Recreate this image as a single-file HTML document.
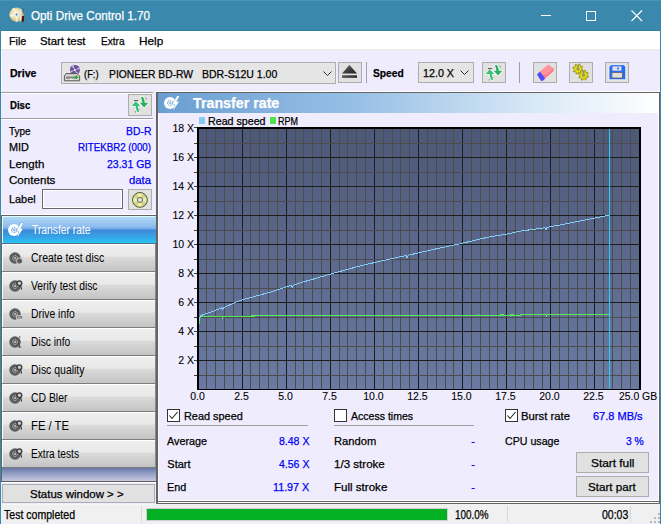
<!DOCTYPE html>
<html><head><meta charset="utf-8"><style>
html,body{margin:0;padding:0;width:661px;height:524px;overflow:hidden;background:#efedfd}
.t{position:absolute;white-space:pre;font-family:"Liberation Sans",sans-serif;-webkit-text-stroke:0.25px currentColor}
</style></head><body>
<div style="position:absolute;left:0px;top:0px;width:661px;height:31px;background:#3a88ab"></div>
<div style="position:absolute;left:1px;top:30px;width:659px;height:1px;background:#2f7fa6"></div>
<div style="position:absolute;left:0px;top:31px;width:1px;height:493px;background:#3a88ab"></div>
<div style="position:absolute;left:660px;top:31px;width:1px;height:493px;background:#3a88ab"></div>
<div style="position:absolute;left:0px;top:523px;width:661px;height:1px;background:#3a88ab"></div>
<div class="t" style="left:31.00px;top:9.84px;font-size:12px;line-height:12px;color:#fff;transform:scaleX(0.9750);transform-origin:0 0;">Opti Drive Control 1.70</div>
<svg style="position:absolute;left:0;top:0" width="30" height="30" viewBox="0 0 30 30">
<defs><radialGradient id="cd" cx="45%" cy="45%" r="60%"><stop offset="0" stop-color="#fffbe8"/><stop offset="0.55" stop-color="#e8dcb0"/><stop offset="1" stop-color="#b8a470"/></radialGradient></defs>
<circle cx="16.6" cy="14.6" r="7.2" fill="url(#cd)"/>
<path d="M16.6 14.6 L12 8.8 L14.2 7.8 Z M16.6 14.6 L10 17 L9.6 14.5 Z M16.6 14.6 L18 21.6 L15.5 21.7 Z" fill="#fff8e0" opacity="0.8"/>
<circle cx="16.6" cy="14.6" r="1.9" fill="#e8f0f0"/><circle cx="16.6" cy="14.6" r="1" fill="#3a88ab"/>
<path d="M20.3 9 L21.6 9.6 L20.8 21.6 L19.6 21.4 Z" fill="#e4e4e4"/>
<rect x="22" y="16" width="2" height="5.6" fill="#6a0808"/><rect x="22.6" y="8.5" width="0.9" height="5" fill="#305a78"/>
</svg>
<div style="position:absolute;left:0px;top:0px;width:661px;height:1px;background:#4a94b4"></div>
<div style="position:absolute;left:541px;top:15px;width:10px;height:1px;background:#fff"></div>
<div style="position:absolute;left:586px;top:11px;width:10px;height:10px;border:1px solid #fff;box-sizing:border-box"></div>
<svg style="position:absolute;left:631px;top:10px" width="12" height="12" viewBox="0 0 12 12"><path d="M0.5 0.5 L11 11 M11 0.5 L0.5 11" stroke="#fff" stroke-width="1.1"/></svg>
<div style="position:absolute;left:1px;top:31px;width:659px;height:18px;background:#fff"></div>
<div style="position:absolute;left:1px;top:49px;width:659px;height:2px;background:#ececec"></div>
<div class="t" style="left:8.50px;top:35.67px;font-size:11.5px;line-height:11.5px;color:#000;transform:scaleX(0.9336);transform-origin:0 0;">File</div>
<div class="t" style="left:40.30px;top:35.67px;font-size:11.5px;line-height:11.5px;color:#000;transform:scaleX(0.9888);transform-origin:0 0;">Start test</div>
<div class="t" style="left:100.60px;top:35.67px;font-size:11.5px;line-height:11.5px;color:#000;transform:scaleX(0.8792);transform-origin:0 0;">Extra</div>
<div class="t" style="left:139.40px;top:35.67px;font-size:11.5px;line-height:11.5px;color:#000;transform:scaleX(1.0230);transform-origin:0 0;">Help</div>
<div style="position:absolute;left:1px;top:51px;width:659px;height:41px;background:#efedfd"></div>
<div style="position:absolute;left:1px;top:51px;width:1px;height:41px;background:#fff"></div>
<div class="t" style="left:9.50px;top:67.69px;font-size:11px;line-height:11px;font-weight:bold;color:#000;transform:scaleX(0.9595);transform-origin:0 0;">Drive</div>
<div style="position:absolute;left:61px;top:62px;width:275px;height:22px;background:#e5e5e5;border:1px solid #adadad;box-sizing:border-box"></div>
<div class="t" style="left:84.00px;top:68.69px;font-size:11px;line-height:11px;color:#000;transform:scaleX(0.8533);transform-origin:0 0;">(F:)</div>
<div class="t" style="left:108.60px;top:68.69px;font-size:11px;line-height:11px;color:#000;transform:scaleX(0.9382);transform-origin:0 0;">PIONEER BD-RW</div>
<div class="t" style="left:202.20px;top:68.69px;font-size:11px;line-height:11px;color:#000;transform:scaleX(0.9547);transform-origin:0 0;">BDR-S12U 1.00</div>
<svg style="position:absolute;left:323px;top:71px" width="9" height="6"><path d="M0.5 0.5 L4.5 4.5 L8.5 0.5" stroke="#333" fill="none" stroke-width="1"/></svg>
<svg style="position:absolute;left:63px;top:64px" width="18" height="18" viewBox="0 0 18 18">
<defs><radialGradient id="pd" cx="50%" cy="50%" r="50%"><stop offset="0" stop-color="#e8e0f0"/><stop offset="0.3" stop-color="#a088c8"/><stop offset="1" stop-color="#6a50a0"/></radialGradient></defs>
<circle cx="11.9" cy="5.9" r="5" fill="#6c5494"/><path d="M11.9 5.9 L8 1.8 L10.5 1 Z M11.9 5.9 L16 10 L13.3 10.8 Z M11.9 5.9 L16.9 5 L16.5 3 Z M11.9 5.9 L7 7 L7.5 9 Z" fill="#c8b4e8"/><circle cx="11.9" cy="5.9" r="1" fill="#f8f8ff"/>
<path d="M3 9.6 L14 9.6 L16.6 12 L16.6 16.8 L1.4 16.8 L1.4 12 Z" fill="#d4d4d4" stroke="#4a4a4a" stroke-width="0.9"/>
<rect x="3" y="12.6" width="9" height="2" fill="#808080"/><rect x="7" y="14.6" width="2.5" height="1" fill="#fff"/>
<path d="M13.3 11.5 L13.3 15 M11.6 13.3 L15 13.3" stroke="#10b010" stroke-width="1.4"/></svg>
<div style="position:absolute;left:338px;top:62px;width:24px;height:21px;background:#e1e1e1;border:1px solid #adadad;box-sizing:border-box"></div>
<svg style="position:absolute;left:338px;top:62px" width="24" height="21"><defs><linearGradient id="ej" x1="0" y1="0" x2="1" y2="1"><stop offset="0" stop-color="#6a6a6a"/><stop offset="1" stop-color="#1a1a1a"/></linearGradient></defs><path d="M11.4 3 L19 11.5 L4 11.5 Z" fill="url(#ej)"/><rect x="4" y="13.2" width="15" height="2.6" fill="url(#ej)"/></svg>
<div style="position:absolute;left:366px;top:62px;width:1px;height:21px;background:#a0a0a0"></div>
<div class="t" style="left:373.30px;top:67.69px;font-size:11px;line-height:11px;font-weight:bold;color:#000;transform:scaleX(0.9299);transform-origin:0 0;">Speed</div>
<div style="position:absolute;left:418px;top:62px;width:56px;height:21px;background:#e5e5e5;border:1px solid #adadad;box-sizing:border-box"></div>
<div class="t" style="left:422.50px;top:68.19px;font-size:11px;line-height:11px;color:#000;transform:scaleX(0.9749);transform-origin:0 0;">12.0 X</div>
<svg style="position:absolute;left:460px;top:70px" width="9" height="6"><path d="M0.5 0.5 L4.5 4.5 L8.5 0.5" stroke="#333" fill="none" stroke-width="1"/></svg>
<div style="position:absolute;left:482px;top:62px;width:24px;height:21px;background:#e1e1e1;border:1px solid #adadad;box-sizing:border-box"></div>
<svg style="position:absolute;left:482px;top:62px" width="24" height="21" viewBox="0 0 24 21">
<path d="M3.6 12 L7.7 7.3 L12.3 12 L10 12 Q10 15.5 11.3 17.8 L9.3 18 Q7.6 15.5 7.6 12 Z" fill="#fff" stroke="#fff" stroke-width="1.4" opacity="0.8"/><path d="M12.8 3.2 L15 3 Q16.6 5.5 16.8 8.7 L20.3 8.7 L16.1 13.6 L11.8 8.7 L14.3 8.7 Q14 5.5 12.8 3.2 Z" fill="#fff" stroke="#fff" stroke-width="1.4" opacity="0.8"/>
<path d="M3.6 12 L7.7 7.3 L12.3 12 L10 12 Q10 15.5 11.3 17.8 L9.3 18 Q7.6 15.5 7.6 12 Z" fill="#34c474"/><path d="M12.8 3.2 L15 3 Q16.6 5.5 16.8 8.7 L20.3 8.7 L16.1 13.6 L11.8 8.7 L14.3 8.7 Q14 5.5 12.8 3.2 Z" fill="#2aae62"/>
<path d="M6 6.6 L10 6.6" stroke="#404040" stroke-width="0.9"/><path d="M17.6 3.7 L18.5 5.6 M10.9 15.2 L11.4 16 M7.1 17.1 L7.5 18.5" stroke="#606060" stroke-width="0.7"/>
</svg>
<div style="position:absolute;left:519px;top:62px;width:1px;height:21px;background:#a0a0a0"></div>
<div style="position:absolute;left:533px;top:62px;width:24px;height:21px;background:#e1e1e1;border:1px solid #adadad;box-sizing:border-box"></div>
<div style="position:absolute;left:569px;top:62px;width:24px;height:21px;background:#e1e1e1;border:1px solid #adadad;box-sizing:border-box"></div>
<div style="position:absolute;left:605px;top:62px;width:24px;height:21px;background:#e1e1e1;border:1px solid #adadad;box-sizing:border-box"></div>
<svg style="position:absolute;left:533px;top:62px" width="24" height="21" viewBox="0 0 24 21">
<path d="M6.9 9.6 L15.2 2.8 L20.9 6.6 L20.6 9 L12.2 16.6 Z" fill="#ff7886"/>
<path d="M15.2 2.8 L20.9 6.6 L12.2 13.5 L6.9 9.6 Z" fill="#ffa0aa" opacity="0.7"/>
<path d="M4 12.5 L6.9 9.6 L12.2 16.6 L9.5 18.9 L7.9 18.8 Z" fill="#4c4cf6"/>
</svg>
<svg style="position:absolute;left:569px;top:62px" width="24" height="21" viewBox="0 0 24 21">
<path d="M12.60 7.00 L14.10 8.01 L13.80 8.99 L11.99 9.00 L11.55 9.55 L11.89 11.32 L10.99 11.80 L9.70 10.53 L9.00 10.60 L7.99 12.10 L7.01 11.80 L7.00 9.99 L6.45 9.55 L4.68 9.89 L4.20 8.99 L5.47 7.70 L5.40 7.00 L3.90 5.99 L4.20 5.01 L6.01 5.00 L6.45 4.45 L6.11 2.68 L7.01 2.20 L8.30 3.47 L9.00 3.40 L10.01 1.90 L10.99 2.20 L11.00 4.01 L11.55 4.45 L13.32 4.11 L13.80 5.01 L12.53 6.30 Z" fill="#e6de08" stroke="#8a8418" stroke-width="0.8"/>
<path d="M18.10 13.20 L19.60 14.21 L19.30 15.19 L17.49 15.20 L17.05 15.75 L17.39 17.52 L16.49 18.00 L15.20 16.73 L14.50 16.80 L13.49 18.30 L12.51 18.00 L12.50 16.19 L11.95 15.75 L10.18 16.09 L9.70 15.19 L10.97 13.90 L10.90 13.20 L9.40 12.19 L9.70 11.21 L11.51 11.20 L11.95 10.65 L11.61 8.88 L12.51 8.40 L13.80 9.67 L14.50 9.60 L15.51 8.10 L16.49 8.40 L16.50 10.21 L17.05 10.65 L18.82 10.31 L19.30 11.21 L18.03 12.50 Z" fill="#e6de08" stroke="#8a8418" stroke-width="0.8"/>
<circle cx="9" cy="7" r="1.8" fill="#b8b020"/><circle cx="14.5" cy="13.2" r="1.8" fill="#b8b020"/>
<rect x="8.2" y="2.8" width="1.6" height="5.5" fill="#909090"/><rect x="13.7" y="9" width="1.6" height="5.5" fill="#909090"/></svg>
<svg style="position:absolute;left:605px;top:62px" width="24" height="21" viewBox="0 0 24 21">
<path d="M6 2.7 L18.7 2.7 L20.7 4.7 L20.7 16.5 Q20.7 17.7 19.5 17.7 L5.2 17.7 Q4 17.7 4 16.5 L4 4.7 Z" fill="#2a6cf0" stroke="#fff" stroke-width="0.7"/>
<rect x="7.4" y="4.4" width="9" height="4.3" fill="#dde0e8"/><circle cx="13" cy="6.5" r="1" fill="#2a6cf0"/>
<rect x="6.9" y="10.5" width="10.5" height="5.5" fill="#e0e0e0" stroke="#606060" stroke-width="0.8"/></svg>
<div style="position:absolute;left:1px;top:92px;width:659px;height:432px;background:#efedfd"></div>
<div style="position:absolute;left:1px;top:92px;width:152px;height:1px;background:#a0a0a0"></div>
<div style="position:absolute;left:1px;top:93px;width:152px;height:1px;background:#fff"></div>
<div class="t" style="left:9.70px;top:99.69px;font-size:11px;line-height:11px;font-weight:bold;color:#000;transform:scaleX(0.8737);transform-origin:0 0;">Disc</div>
<div style="position:absolute;left:128px;top:94px;width:24px;height:22px;background:#e1e1e1;border:1px solid #adadad;box-sizing:border-box"></div>
<svg style="position:absolute;left:128px;top:94px" width="24" height="21" viewBox="0 0 24 21">
<path d="M3.6 12 L7.7 7.3 L12.3 12 L10 12 Q10 15.5 11.3 17.8 L9.3 18 Q7.6 15.5 7.6 12 Z" fill="#fff" stroke="#fff" stroke-width="1.4" opacity="0.8"/><path d="M12.8 3.2 L15 3 Q16.6 5.5 16.8 8.7 L20.3 8.7 L16.1 13.6 L11.8 8.7 L14.3 8.7 Q14 5.5 12.8 3.2 Z" fill="#fff" stroke="#fff" stroke-width="1.4" opacity="0.8"/>
<path d="M3.6 12 L7.7 7.3 L12.3 12 L10 12 Q10 15.5 11.3 17.8 L9.3 18 Q7.6 15.5 7.6 12 Z" fill="#34c474"/><path d="M12.8 3.2 L15 3 Q16.6 5.5 16.8 8.7 L20.3 8.7 L16.1 13.6 L11.8 8.7 L14.3 8.7 Q14 5.5 12.8 3.2 Z" fill="#2aae62"/>
<path d="M6 6.6 L10 6.6" stroke="#404040" stroke-width="0.9"/><path d="M17.6 3.7 L18.5 5.6 M10.9 15.2 L11.4 16 M7.1 17.1 L7.5 18.5" stroke="#606060" stroke-width="0.7"/>
</svg>
<div style="position:absolute;left:1px;top:118px;width:152px;height:1px;background:#a0a0a0"></div>
<div style="position:absolute;left:1px;top:119px;width:152px;height:1px;background:#fff"></div>
<div class="t" style="left:9.40px;top:125.89px;font-size:11px;line-height:11px;color:#000;transform:scaleX(0.9059);transform-origin:0 0;">Type</div>
<div class="t" style="left:125.60px;top:125.89px;font-size:11px;line-height:11px;color:#0000f4;transform:scaleX(0.9446);transform-origin:0 0;">BD-R</div>
<div class="t" style="left:9.40px;top:141.99px;font-size:11px;line-height:11px;color:#000;transform:scaleX(0.9873);transform-origin:0 0;">MID</div>
<div class="t" style="left:78.00px;top:141.99px;font-size:11px;line-height:11px;color:#0000f4;transform:scaleX(0.8845);transform-origin:0 0;">RITEKBR2 (000)</div>
<div class="t" style="left:9.40px;top:158.69px;font-size:11px;line-height:11px;color:#000;transform:scaleX(1.0493);transform-origin:0 0;">Length</div>
<div class="t" style="left:106.70px;top:158.69px;font-size:11px;line-height:11px;color:#0000f4;transform:scaleX(0.9533);transform-origin:0 0;">23.31 GB</div>
<div class="t" style="left:9.40px;top:175.09px;font-size:11px;line-height:11px;color:#000;transform:scaleX(1.0538);transform-origin:0 0;">Contents</div>
<div class="t" style="left:129.00px;top:175.09px;font-size:11px;line-height:11px;color:#0000f4;transform:scaleX(1.0270);transform-origin:0 0;">data</div>
<div class="t" style="left:9.40px;top:193.69px;font-size:11px;line-height:11px;color:#000;transform:scaleX(0.9880);transform-origin:0 0;">Label</div>
<div style="position:absolute;left:42px;top:189px;width:81px;height:20px;background:#efedfd;border:1px solid #6a6a6a;box-shadow:inset 0 0 0 1px #fff;box-sizing:border-box"></div>
<div style="position:absolute;left:128px;top:189px;width:24px;height:21px;background:#e1e1e1;border:1px solid #adadad;box-sizing:border-box"></div>
<svg style="position:absolute;left:128px;top:189px" width="24" height="22" viewBox="0 0 24 22">
<defs><radialGradient id="yd"><stop offset="0" stop-color="#f4f4c0"/><stop offset="1" stop-color="#d8d890"/></radialGradient></defs>
<clipPath id="ydc"><circle cx="11.9" cy="10.9" r="7.4"/></clipPath><circle cx="11.9" cy="10.9" r="7.4" fill="#d4d480"/><path clip-path="url(#ydc)" d="M11.9 10.9 L8 2 L15.8 2 Z M11.9 10.9 L8 20 L15.8 20 Z M11.9 10.9 L3 7 L3 14.8 Z M11.9 10.9 L21 7 L21 14.8 Z" fill="#eeeeb4"/><circle cx="11.9" cy="10.9" r="7.4" fill="none" stroke="#50503a" stroke-width="1"/><circle cx="11.9" cy="10.9" r="2.6" fill="#c8d0c0" stroke="#6a7a6a" stroke-width="1"/><circle cx="11.9" cy="10.9" r="1.2" fill="#f0f0f0"/></svg>
<div style="position:absolute;left:1px;top:214px;width:155px;height:1px;background:#fff"></div>
<div style="position:absolute;left:1px;top:215px;width:157px;height:1px;background:#646464"></div>
<div style="position:absolute;left:1px;top:215px;width:1px;height:267px;background:#646464"></div>
<div style="position:absolute;left:2px;top:216px;width:154px;height:27px;background:linear-gradient(#b4dcf8 0%,#8cbcee 40%,#6ea6e6 48%,#3e88d8 52%,#36a6e8 80%,#28c8f6 100%)"></div>
<div style="position:absolute;left:2px;top:216px;width:153px;height:1px;background:#e0fcff"></div>
<div style="position:absolute;left:2px;top:216px;width:1px;height:27px;background:#e0fcff"></div>
<svg style="position:absolute;left:6.300000000000001px;top:221.8px" width="18" height="16" viewBox="0 0 18 16">
<circle cx="8" cy="8" r="6" fill="#fff"/><circle cx="8" cy="8" r="2.4" fill="none" stroke="#5a9ae0" stroke-width="1.1" stroke-dasharray="1.3 0.7"/><circle cx="8" cy="8" r="0.9" fill="#5a9ae0"/>
<path d="M15.2 1 L17.2 1.2 L14.2 6.9 L16.9 6.5 L11.1 15.4 L13.4 9.3 L10.3 9.7 Z" fill="#fff" stroke="#5a9ae0" stroke-width="0.9" stroke-linejoin="round"/><path d="M15.2 1 L17.2 1.2 L14.2 6.9 L16.9 6.5 L11.1 15.4 L13.4 9.3 L10.3 9.7 Z" fill="#fff"/></svg>
<div class="t" style="left:31.50px;top:224.04px;font-size:12px;line-height:12px;color:#fff;transform:scaleX(0.8571);transform-origin:0 0;-webkit-text-stroke:0">Transfer rate</div>
<div style="position:absolute;left:2px;top:243px;width:154px;height:1px;background:#5a6a80"></div>
<div style="position:absolute;left:2px;top:244px;width:154px;height:27px;background:linear-gradient(#f0f0f0 0%,#e8e8e8 45%,#dadada 50%,#c4c4c4 100%)"></div>
<div style="position:absolute;left:2px;top:244px;width:153px;height:1px;background:#fff"></div>
<div style="position:absolute;left:2px;top:244px;width:1px;height:27px;background:#fff"></div>
<div style="position:absolute;left:155px;top:244px;width:1px;height:28px;background:#8a8a8a"></div>
<svg style="position:absolute;left:6.699999999999999px;top:249.89999999999998px" width="18" height="16" viewBox="0 0 18 16">
<circle cx="8" cy="8" r="5.7" fill="#5c5c5c"/><circle cx="8" cy="8" r="2.4" fill="none" stroke="#d0d0d0" stroke-width="1" stroke-dasharray="1.2 0.8"/><circle cx="8" cy="8" r="0.9" fill="#d8d8d8"/><circle cx="12.5" cy="11" r="3" fill="#5a5a5a" stroke="#e0e0e0" stroke-width="0.8"/></svg>
<div class="t" style="left:31.00px;top:251.84px;font-size:12px;line-height:12px;color:#000;transform:scaleX(0.8792);transform-origin:0 0;-webkit-text-stroke:0">Create test disc</div>
<div style="position:absolute;left:2px;top:271px;width:154px;height:1px;background:#7c7c7c"></div>
<div style="position:absolute;left:2px;top:272px;width:154px;height:27px;background:linear-gradient(#f0f0f0 0%,#e8e8e8 45%,#dadada 50%,#c4c4c4 100%)"></div>
<div style="position:absolute;left:2px;top:272px;width:153px;height:1px;background:#fff"></div>
<div style="position:absolute;left:2px;top:272px;width:1px;height:27px;background:#fff"></div>
<div style="position:absolute;left:155px;top:272px;width:1px;height:28px;background:#8a8a8a"></div>
<svg style="position:absolute;left:6.699999999999999px;top:277.9px" width="18" height="16" viewBox="0 0 18 16">
<circle cx="8" cy="8" r="5.7" fill="#5c5c5c"/><circle cx="8" cy="8" r="2.4" fill="none" stroke="#d0d0d0" stroke-width="1" stroke-dasharray="1.2 0.8"/><circle cx="8" cy="8" r="0.9" fill="#d8d8d8"/><circle cx="12.4" cy="5.2" r="2.4" fill="#c8c8c8" stroke="#3a3a3a" stroke-width="1.3"/><path d="M13.6 7.4 L14.6 11.5" stroke="#303030" stroke-width="1.1"/></svg>
<div class="t" style="left:31.00px;top:279.84px;font-size:12px;line-height:12px;color:#000;transform:scaleX(0.8596);transform-origin:0 0;-webkit-text-stroke:0">Verify test disc</div>
<div style="position:absolute;left:2px;top:299px;width:154px;height:1px;background:#7c7c7c"></div>
<div style="position:absolute;left:2px;top:300px;width:154px;height:27px;background:linear-gradient(#f0f0f0 0%,#e8e8e8 45%,#dadada 50%,#c4c4c4 100%)"></div>
<div style="position:absolute;left:2px;top:300px;width:153px;height:1px;background:#fff"></div>
<div style="position:absolute;left:2px;top:300px;width:1px;height:27px;background:#fff"></div>
<div style="position:absolute;left:155px;top:300px;width:1px;height:28px;background:#8a8a8a"></div>
<svg style="position:absolute;left:6.699999999999999px;top:305.9px" width="18" height="16" viewBox="0 0 18 16">
<circle cx="8" cy="8" r="5.7" fill="#5c5c5c"/><circle cx="8" cy="8" r="2.4" fill="none" stroke="#d0d0d0" stroke-width="1" stroke-dasharray="1.2 0.8"/><circle cx="8" cy="8" r="0.9" fill="#d8d8d8"/><rect x="9.5" y="9.5" width="6" height="3.5" fill="#7a7a7a" stroke="#e0e0e0" stroke-width="0.6"/><path d="M10.5 11.3 L14 11.3" stroke="#ccc" stroke-width="0.8"/></svg>
<div class="t" style="left:31.00px;top:307.84px;font-size:12px;line-height:12px;color:#000;transform:scaleX(0.8641);transform-origin:0 0;-webkit-text-stroke:0">Drive info</div>
<div style="position:absolute;left:2px;top:327px;width:154px;height:1px;background:#7c7c7c"></div>
<div style="position:absolute;left:2px;top:328px;width:154px;height:27px;background:linear-gradient(#f0f0f0 0%,#e8e8e8 45%,#dadada 50%,#c4c4c4 100%)"></div>
<div style="position:absolute;left:2px;top:328px;width:153px;height:1px;background:#fff"></div>
<div style="position:absolute;left:2px;top:328px;width:1px;height:27px;background:#fff"></div>
<div style="position:absolute;left:155px;top:328px;width:1px;height:28px;background:#8a8a8a"></div>
<svg style="position:absolute;left:6.699999999999999px;top:333.9px" width="18" height="16" viewBox="0 0 18 16">
<circle cx="8" cy="8" r="5.7" fill="#5c5c5c"/><circle cx="8" cy="8" r="2.4" fill="none" stroke="#d0d0d0" stroke-width="1" stroke-dasharray="1.2 0.8"/><circle cx="8" cy="8" r="0.9" fill="#d8d8d8"/><path d="M12.3 5.5 L12.3 13 L13.8 13" stroke="#505050" stroke-width="1.3" fill="none"/><circle cx="12.8" cy="3" r="0.8" fill="#505050"/></svg>
<div class="t" style="left:31.00px;top:335.84px;font-size:12px;line-height:12px;color:#000;transform:scaleX(0.8541);transform-origin:0 0;-webkit-text-stroke:0">Disc info</div>
<div style="position:absolute;left:2px;top:355px;width:154px;height:1px;background:#7c7c7c"></div>
<div style="position:absolute;left:2px;top:356px;width:154px;height:27px;background:linear-gradient(#f0f0f0 0%,#e8e8e8 45%,#dadada 50%,#c4c4c4 100%)"></div>
<div style="position:absolute;left:2px;top:356px;width:153px;height:1px;background:#fff"></div>
<div style="position:absolute;left:2px;top:356px;width:1px;height:27px;background:#fff"></div>
<div style="position:absolute;left:155px;top:356px;width:1px;height:28px;background:#8a8a8a"></div>
<svg style="position:absolute;left:6.699999999999999px;top:361.9px" width="18" height="16" viewBox="0 0 18 16">
<circle cx="8" cy="8" r="5.7" fill="#5c5c5c"/><circle cx="8" cy="8" r="2.4" fill="none" stroke="#d0d0d0" stroke-width="1" stroke-dasharray="1.2 0.8"/><circle cx="8" cy="8" r="0.9" fill="#d8d8d8"/><circle cx="12.4" cy="5.2" r="2.4" fill="#c8c8c8" stroke="#3a3a3a" stroke-width="1.3"/><path d="M13.6 7.4 L14.6 11.5" stroke="#303030" stroke-width="1.1"/></svg>
<div class="t" style="left:31.00px;top:363.84px;font-size:12px;line-height:12px;color:#000;transform:scaleX(0.8719);transform-origin:0 0;-webkit-text-stroke:0">Disc quality</div>
<div style="position:absolute;left:2px;top:383px;width:154px;height:1px;background:#7c7c7c"></div>
<div style="position:absolute;left:2px;top:384px;width:154px;height:27px;background:linear-gradient(#f0f0f0 0%,#e8e8e8 45%,#dadada 50%,#c4c4c4 100%)"></div>
<div style="position:absolute;left:2px;top:384px;width:153px;height:1px;background:#fff"></div>
<div style="position:absolute;left:2px;top:384px;width:1px;height:27px;background:#fff"></div>
<div style="position:absolute;left:155px;top:384px;width:1px;height:28px;background:#8a8a8a"></div>
<svg style="position:absolute;left:6.699999999999999px;top:389.9px" width="18" height="16" viewBox="0 0 18 16">
<circle cx="8" cy="8" r="5.7" fill="#5c5c5c"/><circle cx="8" cy="8" r="2.4" fill="none" stroke="#d0d0d0" stroke-width="1" stroke-dasharray="1.2 0.8"/><circle cx="8" cy="8" r="0.9" fill="#d8d8d8"/><circle cx="12.4" cy="5.2" r="2.4" fill="#c8c8c8" stroke="#3a3a3a" stroke-width="1.3"/><path d="M13.6 7.4 L14.6 11.5" stroke="#303030" stroke-width="1.1"/></svg>
<div class="t" style="left:31.00px;top:391.84px;font-size:12px;line-height:12px;color:#000;transform:scaleX(0.8667);transform-origin:0 0;-webkit-text-stroke:0">CD Bler</div>
<div style="position:absolute;left:2px;top:411px;width:154px;height:1px;background:#7c7c7c"></div>
<div style="position:absolute;left:2px;top:412px;width:154px;height:27px;background:linear-gradient(#f0f0f0 0%,#e8e8e8 45%,#dadada 50%,#c4c4c4 100%)"></div>
<div style="position:absolute;left:2px;top:412px;width:153px;height:1px;background:#fff"></div>
<div style="position:absolute;left:2px;top:412px;width:1px;height:27px;background:#fff"></div>
<div style="position:absolute;left:155px;top:412px;width:1px;height:28px;background:#8a8a8a"></div>
<svg style="position:absolute;left:6.699999999999999px;top:417.9px" width="18" height="16" viewBox="0 0 18 16">
<circle cx="8" cy="8" r="5.7" fill="#5c5c5c"/><circle cx="8" cy="8" r="2.4" fill="none" stroke="#d0d0d0" stroke-width="1" stroke-dasharray="1.2 0.8"/><circle cx="8" cy="8" r="0.9" fill="#d8d8d8"/><circle cx="12.4" cy="5.2" r="2.4" fill="#c8c8c8" stroke="#3a3a3a" stroke-width="1.3"/><path d="M13.6 7.4 L14.6 11.5" stroke="#303030" stroke-width="1.1"/></svg>
<div class="t" style="left:31.00px;top:419.84px;font-size:12px;line-height:12px;color:#000;transform:scaleX(0.9394);transform-origin:0 0;-webkit-text-stroke:0">FE / TE</div>
<div style="position:absolute;left:2px;top:439px;width:154px;height:1px;background:#7c7c7c"></div>
<div style="position:absolute;left:2px;top:440px;width:154px;height:27px;background:linear-gradient(#f0f0f0 0%,#e8e8e8 45%,#dadada 50%,#c4c4c4 100%)"></div>
<div style="position:absolute;left:2px;top:440px;width:153px;height:1px;background:#fff"></div>
<div style="position:absolute;left:2px;top:440px;width:1px;height:27px;background:#fff"></div>
<div style="position:absolute;left:155px;top:440px;width:1px;height:28px;background:#8a8a8a"></div>
<svg style="position:absolute;left:6.699999999999999px;top:445.9px" width="18" height="16" viewBox="0 0 18 16">
<circle cx="8" cy="8" r="5.7" fill="#5c5c5c"/><circle cx="8" cy="8" r="2.4" fill="none" stroke="#d0d0d0" stroke-width="1" stroke-dasharray="1.2 0.8"/><circle cx="8" cy="8" r="0.9" fill="#d8d8d8"/><circle cx="12.4" cy="5.2" r="2.4" fill="#c8c8c8" stroke="#3a3a3a" stroke-width="1.3"/><path d="M13.6 7.4 L14.6 11.5" stroke="#303030" stroke-width="1.1"/></svg>
<div class="t" style="left:31.00px;top:447.84px;font-size:12px;line-height:12px;color:#000;transform:scaleX(0.8467);transform-origin:0 0;-webkit-text-stroke:0">Extra tests</div>
<div style="position:absolute;left:2px;top:467px;width:154px;height:1px;background:#7c7c7c"></div>
<div style="position:absolute;left:2px;top:468px;width:154px;height:13px;background:linear-gradient(#6878a8,#9aa4c8 50%,#c4c8de)"></div>
<div style="position:absolute;left:1px;top:481px;width:156px;height:1px;background:#606060"></div>
<div style="position:absolute;left:2px;top:482px;width:154px;height:1px;background:#fff"></div>
<div style="position:absolute;left:2px;top:484px;width:153px;height:19px;background:#e1e1e1;border:1px solid #adadad;box-sizing:border-box"></div>
<div class="t" style="left:30.35px;top:489.19px;font-size:11px;line-height:11px;color:#000;transform:scaleX(1.0424);transform-origin:0 0;">Status window &gt; &gt;</div>
<div style="position:absolute;left:156px;top:91px;width:504px;height:413px;background:#efedfd"></div>
<div style="position:absolute;left:156px;top:91px;width:504px;height:1px;background:#fff"></div>
<div style="position:absolute;left:156px;top:92px;width:504px;height:1px;background:#646464"></div>
<div style="position:absolute;left:156px;top:92px;width:2px;height:412px;background:#646464"></div>
<div style="position:absolute;left:659px;top:92px;width:1px;height:412px;background:#646464"></div>
<div style="position:absolute;left:158px;top:113px;width:1px;height:388px;background:#f8f8ff"></div>
<div style="position:absolute;left:658px;top:113px;width:1px;height:388px;background:#fff"></div>
<div style="position:absolute;left:158px;top:500px;width:501px;height:1px;background:#fff"></div>
<div style="position:absolute;left:158px;top:501px;width:502px;height:1px;background:#646464"></div>
<div style="position:absolute;left:158px;top:502px;width:501px;height:1px;background:#fff"></div>
<div style="position:absolute;left:156px;top:503px;width:504px;height:1px;background:#646464"></div>
<div style="position:absolute;left:158px;top:93px;width:501px;height:20px;background:linear-gradient(90deg,#6a9ed2 0%,#98c0e6 40%,#d8e8f6 75%,#ffffff 100%)"></div>
<svg style="position:absolute;left:162.3px;top:95px" width="18" height="16" viewBox="0 0 18 16">
<circle cx="8" cy="8" r="6" fill="#fff"/><circle cx="8" cy="8" r="2.4" fill="none" stroke="#74a8da" stroke-width="1.1" stroke-dasharray="1.3 0.7"/><circle cx="8" cy="8" r="0.9" fill="#74a8da"/>
<path d="M15.2 1 L17.2 1.2 L14.2 6.9 L16.9 6.5 L11.1 15.4 L13.4 9.3 L10.3 9.7 Z" fill="#fff" stroke="#74a8da" stroke-width="0.9" stroke-linejoin="round"/><path d="M15.2 1 L17.2 1.2 L14.2 6.9 L16.9 6.5 L11.1 15.4 L13.4 9.3 L10.3 9.7 Z" fill="#fff"/></svg>
<div class="t" style="left:193.40px;top:95.65px;font-size:14px;line-height:14px;font-weight:bold;color:#fff;transform:scaleX(1.0174);transform-origin:0 0;">Transfer rate</div>
<div style="position:absolute;left:199px;top:117px;width:6px;height:7px;background:#88ccf4"></div>
<div class="t" style="left:208.00px;top:116.11px;font-size:10.5px;line-height:10.5px;color:#000;transform:scaleX(1.0155);transform-origin:0 0;">Read speed</div>
<div style="position:absolute;left:270px;top:117px;width:6px;height:7px;background:#50e050"></div>
<div class="t" style="left:278.00px;top:116.11px;font-size:10.5px;line-height:10.5px;color:#000;transform:scaleX(0.8573);transform-origin:0 0;">RPM</div>
<svg style="position:absolute;left:0;top:0" width="661" height="524" viewBox="0 0 661 524" shape-rendering="crispEdges">
<defs><linearGradient id="pf" x1="0" y1="0" x2="0" y2="1"><stop offset="0" stop-color="#4d5877"/><stop offset="1" stop-color="#6a7aa2"/></linearGradient></defs>
<rect x="197" y="127" width="443" height="262" fill="url(#pf)"/>
<rect x="206" y="129" width="1" height="260" fill="#4c4c4c"/>
<rect x="215" y="129" width="1" height="260" fill="#4c4c4c"/>
<rect x="224" y="129" width="1" height="260" fill="#4c4c4c"/>
<rect x="233" y="129" width="1" height="260" fill="#4c4c4c"/>
<rect x="242" y="129" width="1" height="260" fill="#1c1c1c"/>
<rect x="250" y="129" width="1" height="260" fill="#4c4c4c"/>
<rect x="259" y="129" width="1" height="260" fill="#4c4c4c"/>
<rect x="268" y="129" width="1" height="260" fill="#4c4c4c"/>
<rect x="277" y="129" width="1" height="260" fill="#4c4c4c"/>
<rect x="286" y="129" width="1" height="260" fill="#1c1c1c"/>
<rect x="295" y="129" width="1" height="260" fill="#4c4c4c"/>
<rect x="303" y="129" width="1" height="260" fill="#4c4c4c"/>
<rect x="312" y="129" width="1" height="260" fill="#4c4c4c"/>
<rect x="321" y="129" width="1" height="260" fill="#4c4c4c"/>
<rect x="330" y="129" width="1" height="260" fill="#1c1c1c"/>
<rect x="339" y="129" width="1" height="260" fill="#4c4c4c"/>
<rect x="347" y="129" width="1" height="260" fill="#4c4c4c"/>
<rect x="356" y="129" width="1" height="260" fill="#4c4c4c"/>
<rect x="365" y="129" width="1" height="260" fill="#4c4c4c"/>
<rect x="374" y="129" width="1" height="260" fill="#1c1c1c"/>
<rect x="383" y="129" width="1" height="260" fill="#4c4c4c"/>
<rect x="392" y="129" width="1" height="260" fill="#4c4c4c"/>
<rect x="400" y="129" width="1" height="260" fill="#4c4c4c"/>
<rect x="409" y="129" width="1" height="260" fill="#4c4c4c"/>
<rect x="418" y="129" width="1" height="260" fill="#1c1c1c"/>
<rect x="427" y="129" width="1" height="260" fill="#4c4c4c"/>
<rect x="436" y="129" width="1" height="260" fill="#4c4c4c"/>
<rect x="445" y="129" width="1" height="260" fill="#4c4c4c"/>
<rect x="453" y="129" width="1" height="260" fill="#4c4c4c"/>
<rect x="462" y="129" width="1" height="260" fill="#1c1c1c"/>
<rect x="471" y="129" width="1" height="260" fill="#4c4c4c"/>
<rect x="480" y="129" width="1" height="260" fill="#4c4c4c"/>
<rect x="489" y="129" width="1" height="260" fill="#4c4c4c"/>
<rect x="497" y="129" width="1" height="260" fill="#4c4c4c"/>
<rect x="506" y="129" width="1" height="260" fill="#1c1c1c"/>
<rect x="515" y="129" width="1" height="260" fill="#4c4c4c"/>
<rect x="524" y="129" width="1" height="260" fill="#4c4c4c"/>
<rect x="533" y="129" width="1" height="260" fill="#4c4c4c"/>
<rect x="542" y="129" width="1" height="260" fill="#4c4c4c"/>
<rect x="550" y="129" width="1" height="260" fill="#1c1c1c"/>
<rect x="559" y="129" width="1" height="260" fill="#4c4c4c"/>
<rect x="568" y="129" width="1" height="260" fill="#4c4c4c"/>
<rect x="577" y="129" width="1" height="260" fill="#4c4c4c"/>
<rect x="586" y="129" width="1" height="260" fill="#4c4c4c"/>
<rect x="594" y="129" width="1" height="260" fill="#1c1c1c"/>
<rect x="603" y="129" width="1" height="260" fill="#4c4c4c"/>
<rect x="612" y="129" width="1" height="260" fill="#4c4c4c"/>
<rect x="621" y="129" width="1" height="260" fill="#4c4c4c"/>
<rect x="630" y="129" width="1" height="260" fill="#4c4c4c"/>
<rect x="199" y="375" width="440" height="1" fill="#4c4c4c"/>
<rect x="194" y="375" width="3" height="1" fill="#404040"/>
<rect x="199" y="360" width="440" height="1" fill="#1c1c1c"/>
<rect x="194" y="360" width="3" height="1" fill="#404040"/>
<rect x="199" y="346" width="440" height="1" fill="#4c4c4c"/>
<rect x="194" y="346" width="3" height="1" fill="#404040"/>
<rect x="199" y="331" width="440" height="1" fill="#1c1c1c"/>
<rect x="194" y="331" width="3" height="1" fill="#404040"/>
<rect x="199" y="317" width="440" height="1" fill="#4c4c4c"/>
<rect x="194" y="317" width="3" height="1" fill="#404040"/>
<rect x="199" y="302" width="440" height="1" fill="#1c1c1c"/>
<rect x="194" y="302" width="3" height="1" fill="#404040"/>
<rect x="199" y="288" width="440" height="1" fill="#4c4c4c"/>
<rect x="194" y="288" width="3" height="1" fill="#404040"/>
<rect x="199" y="273" width="440" height="1" fill="#1c1c1c"/>
<rect x="194" y="273" width="3" height="1" fill="#404040"/>
<rect x="199" y="259" width="440" height="1" fill="#4c4c4c"/>
<rect x="194" y="259" width="3" height="1" fill="#404040"/>
<rect x="199" y="244" width="440" height="1" fill="#1c1c1c"/>
<rect x="194" y="244" width="3" height="1" fill="#404040"/>
<rect x="199" y="230" width="440" height="1" fill="#4c4c4c"/>
<rect x="194" y="230" width="3" height="1" fill="#404040"/>
<rect x="199" y="215" width="440" height="1" fill="#1c1c1c"/>
<rect x="194" y="215" width="3" height="1" fill="#404040"/>
<rect x="199" y="201" width="440" height="1" fill="#4c4c4c"/>
<rect x="194" y="201" width="3" height="1" fill="#404040"/>
<rect x="199" y="186" width="440" height="1" fill="#1c1c1c"/>
<rect x="194" y="186" width="3" height="1" fill="#404040"/>
<rect x="199" y="172" width="440" height="1" fill="#4c4c4c"/>
<rect x="194" y="172" width="3" height="1" fill="#404040"/>
<rect x="199" y="157" width="440" height="1" fill="#1c1c1c"/>
<rect x="194" y="157" width="3" height="1" fill="#404040"/>
<rect x="199" y="143" width="440" height="1" fill="#4c4c4c"/>
<rect x="194" y="143" width="3" height="1" fill="#404040"/>
<rect x="194" y="127" width="3" height="1" fill="#404040"/>
<rect x="197" y="127" width="444" height="2" fill="#000"/>
<rect x="197" y="127" width="2" height="263" fill="#000"/>
<rect x="639" y="127" width="2" height="263" fill="#000"/>
<rect x="197" y="389" width="444" height="1" fill="#000"/>
<rect x="609" y="129" width="1" height="260" fill="#30c8f0"/>
</svg>
<svg style="position:absolute;left:0;top:0" width="661" height="524"><path d="M199.5 324 L199.5 319 L200.5 316.5 L252 316.5 L252 315.5 L520 315.5 L520 314.5 L609 314.5 M222 316.5 L222.5 317.5 L223 316.5 M251 316.5 L252 315.5 L253 316.5 L254 315.5 L255 316.5 M477 315.5 L478.5 314.5 L480 315.5 M500 315.5 L501 314.5 L502 315.5 L503 314.5 L504 315.5 M510 315.5 L511 314.5 L512 315.5 L513 314.5 L514 315.5 M545.5 314.5 L546.5 316 L547.5 314.5" stroke="#55ea55" stroke-width="1" fill="none" shape-rendering="crispEdges"/><path d="M199.5 321.0 L199.5 318.0 L200.5 316.0 L201.5 315.5 L206.0 313.5 L211.0 312.0 L221.5 308.0 L222.5 309.5 L223.5 307.5 L226.0 306.5 L234.0 303.0 L240.0 300.5 L270.0 292.2 L290.0 285.8 L291.0 285.6 L292.2 287.6 L293.5 285.2 L300.0 282.9 L330.8 274.0 L340.0 271.4 L360.0 266.0 L375.0 262.4 L406.0 255.5 L407.0 258.0 L408.2 255.2 L418.0 253.0 L440.0 248.0 L462.4 243.2 L488.4 237.1 L506.6 234.1 L520.0 231.2 L545.0 227.7 L546.0 229.5 L547.0 227.4 L565.4 223.9 L588.0 219.4 L609.0 215.3" stroke="#84ccf6" stroke-width="1" fill="none" shape-rendering="crispEdges"/></svg>
<div class="t" style="left:178.23px;top:354.71px;font-size:10.5px;line-height:10.5px;color:#000;-webkit-text-stroke:0.1px">2 X</div>
<div class="t" style="left:178.23px;top:325.71px;font-size:10.5px;line-height:10.5px;color:#000;-webkit-text-stroke:0.1px">4 X</div>
<div class="t" style="left:178.23px;top:296.71px;font-size:10.5px;line-height:10.5px;color:#000;-webkit-text-stroke:0.1px">6 X</div>
<div class="t" style="left:178.23px;top:267.71px;font-size:10.5px;line-height:10.5px;color:#000;-webkit-text-stroke:0.1px">8 X</div>
<div class="t" style="left:172.41px;top:238.71px;font-size:10.5px;line-height:10.5px;color:#000;-webkit-text-stroke:0.1px">10 X</div>
<div class="t" style="left:172.41px;top:209.71px;font-size:10.5px;line-height:10.5px;color:#000;-webkit-text-stroke:0.1px">12 X</div>
<div class="t" style="left:172.41px;top:180.71px;font-size:10.5px;line-height:10.5px;color:#000;-webkit-text-stroke:0.1px">14 X</div>
<div class="t" style="left:172.41px;top:151.71px;font-size:10.5px;line-height:10.5px;color:#000;-webkit-text-stroke:0.1px">16 X</div>
<div class="t" style="left:172.41px;top:122.71px;font-size:10.5px;line-height:10.5px;color:#000;-webkit-text-stroke:0.1px">18 X</div>
<div class="t" style="left:190.20px;top:391.11px;font-size:10.5px;line-height:10.5px;color:#000;-webkit-text-stroke:0.1px">0.0</div>
<div class="t" style="left:234.20px;top:391.11px;font-size:10.5px;line-height:10.5px;color:#000;-webkit-text-stroke:0.1px">2.5</div>
<div class="t" style="left:278.20px;top:391.11px;font-size:10.5px;line-height:10.5px;color:#000;-webkit-text-stroke:0.1px">5.0</div>
<div class="t" style="left:322.20px;top:391.11px;font-size:10.5px;line-height:10.5px;color:#000;-webkit-text-stroke:0.1px">7.5</div>
<div class="t" style="left:363.28px;top:391.11px;font-size:10.5px;line-height:10.5px;color:#000;-webkit-text-stroke:0.1px">10.0</div>
<div class="t" style="left:407.28px;top:391.11px;font-size:10.5px;line-height:10.5px;color:#000;-webkit-text-stroke:0.1px">12.5</div>
<div class="t" style="left:451.28px;top:391.11px;font-size:10.5px;line-height:10.5px;color:#000;-webkit-text-stroke:0.1px">15.0</div>
<div class="t" style="left:495.28px;top:391.11px;font-size:10.5px;line-height:10.5px;color:#000;-webkit-text-stroke:0.1px">17.5</div>
<div class="t" style="left:539.28px;top:391.11px;font-size:10.5px;line-height:10.5px;color:#000;-webkit-text-stroke:0.1px">20.0</div>
<div class="t" style="left:583.28px;top:391.11px;font-size:10.5px;line-height:10.5px;color:#000;-webkit-text-stroke:0.1px">22.5</div>
<div class="t" style="left:619.20px;top:391.11px;font-size:10.5px;line-height:10.5px;color:#000;transform:scaleX(0.9888);transform-origin:0 0;-webkit-text-stroke:0.1px">25.0 GB</div>
<div style="position:absolute;left:167px;top:409px;width:13px;height:13px;background:#fff;border:1px solid #333;box-sizing:border-box"></div>
<svg style="position:absolute;left:167px;top:409px" width="13" height="13"><path d="M2.5 6.5 L5 9.5 L10.5 3" stroke="#222" stroke-width="1.1" fill="none"/></svg>
<div class="t" style="left:183.50px;top:410.89px;font-size:11px;line-height:11px;color:#000;transform:scaleX(0.9911);transform-origin:0 0;">Read speed</div>
<div style="position:absolute;left:167px;top:425px;width:141px;height:1px;background:#a0a0a0"></div>
<div style="position:absolute;left:334px;top:409px;width:13px;height:13px;background:#fff;border:1px solid #333;box-sizing:border-box"></div>
<div class="t" style="left:350.50px;top:410.89px;font-size:11px;line-height:11px;color:#000;transform:scaleX(0.9584);transform-origin:0 0;">Access times</div>
<div style="position:absolute;left:334px;top:425px;width:140px;height:1px;background:#a0a0a0"></div>
<div style="position:absolute;left:505px;top:409px;width:13px;height:13px;background:#fff;border:1px solid #333;box-sizing:border-box"></div>
<svg style="position:absolute;left:505px;top:409px" width="13" height="13"><path d="M2.5 6.5 L5 9.5 L10.5 3" stroke="#222" stroke-width="1.1" fill="none"/></svg>
<div class="t" style="left:521.40px;top:410.89px;font-size:11px;line-height:11px;color:#000;transform:scaleX(1.0275);transform-origin:0 0;">Burst rate</div>
<div class="t" style="left:593.00px;top:410.89px;font-size:11px;line-height:11px;color:#0000f4;">67.8 MB/s</div>
<div class="t" style="left:167.30px;top:435.69px;font-size:11px;line-height:11px;color:#000;transform:scaleX(0.9837);transform-origin:0 0;">Average</div>
<div class="t" style="left:278.60px;top:435.69px;font-size:11px;line-height:11px;color:#0000f4;transform:scaleX(0.9561);transform-origin:0 0;">8.48 X</div>
<div class="t" style="left:167.30px;top:458.69px;font-size:11px;line-height:11px;color:#000;">Start</div>
<div class="t" style="left:278.60px;top:458.69px;font-size:11px;line-height:11px;color:#0000f4;transform:scaleX(0.9561);transform-origin:0 0;">4.56 X</div>
<div class="t" style="left:167.30px;top:481.69px;font-size:11px;line-height:11px;color:#000;transform:scaleX(0.9858);transform-origin:0 0;">End</div>
<div class="t" style="left:272.80px;top:481.69px;font-size:11px;line-height:11px;color:#0000f4;transform:scaleX(0.9755);transform-origin:0 0;">11.97 X</div>
<div class="t" style="left:334.20px;top:435.69px;font-size:11px;line-height:11px;color:#000;transform:scaleX(1.0150);transform-origin:0 0;">Random</div>
<div class="t" style="left:471.14px;top:435.69px;font-size:11px;line-height:11px;color:#0000f4;">-</div>
<div class="t" style="left:334.20px;top:458.69px;font-size:11px;line-height:11px;color:#000;transform:scaleX(1.0518);transform-origin:0 0;">1/3 stroke</div>
<div class="t" style="left:471.14px;top:458.69px;font-size:11px;line-height:11px;color:#0000f4;">-</div>
<div class="t" style="left:334.20px;top:481.69px;font-size:11px;line-height:11px;color:#000;transform:scaleX(1.0506);transform-origin:0 0;">Full stroke</div>
<div class="t" style="left:471.14px;top:481.69px;font-size:11px;line-height:11px;color:#0000f4;">-</div>
<div class="t" style="left:505.40px;top:435.69px;font-size:11px;line-height:11px;color:#000;transform:scaleX(0.9671);transform-origin:0 0;">CPU usage</div>
<div class="t" style="left:625.60px;top:435.69px;font-size:11px;line-height:11px;color:#0000f4;transform:scaleX(0.9392);transform-origin:0 0;">3 %</div>
<div style="position:absolute;left:576px;top:452px;width:73px;height:21px;background:#e1e1e1;border:1px solid #adadad;box-sizing:border-box"></div>
<div class="t" style="left:590.70px;top:457.69px;font-size:11px;line-height:11px;color:#000;transform:scaleX(1.0758);transform-origin:0 0;">Start full</div>
<div style="position:absolute;left:576px;top:476px;width:73px;height:21px;background:#e1e1e1;border:1px solid #adadad;box-sizing:border-box"></div>
<div class="t" style="left:588.30px;top:481.69px;font-size:11px;line-height:11px;color:#000;transform:scaleX(1.0567);transform-origin:0 0;">Start part</div>
<div style="position:absolute;left:1px;top:504px;width:659px;height:19px;background:#f0f0f0"></div>
<div style="position:absolute;left:1px;top:504px;width:155px;height:1px;background:#f6f6f6"></div>
<div class="t" style="left:3.60px;top:508.84px;font-size:12px;line-height:12px;color:#000;transform:scaleX(0.8798);transform-origin:0 0;">Test completed</div>
<div style="position:absolute;left:141px;top:506px;width:1px;height:16px;background:#d8d8d8"></div>
<div style="position:absolute;left:146px;top:508px;width:302px;height:13px;background:#e6e6e6;border:1px solid #d4ccd4;box-sizing:border-box"></div>
<div style="position:absolute;left:147px;top:509px;width:300px;height:11px;background:#06b025"></div>
<div class="t" style="left:454.50px;top:508.84px;font-size:12px;line-height:12px;color:#000;transform:scaleX(0.8230);transform-origin:0 0;">100.0%</div>
<div style="position:absolute;left:507px;top:506px;width:1px;height:16px;background:#d8d8d8"></div>
<div class="t" style="left:602.00px;top:508.84px;font-size:12px;line-height:12px;color:#000;transform:scaleX(0.8758);transform-origin:0 0;">00:03</div>
<div style="position:absolute;left:630px;top:506px;width:1px;height:16px;background:#d8d8d8"></div>
<div style="position:absolute;left:658px;top:513px;width:2px;height:2px;background:#b8b8b8"></div>
<div style="position:absolute;left:654px;top:517px;width:2px;height:2px;background:#b8b8b8"></div>
<div style="position:absolute;left:658px;top:517px;width:2px;height:2px;background:#b8b8b8"></div>
<div style="position:absolute;left:650px;top:521px;width:2px;height:2px;background:#b8b8b8"></div>
<div style="position:absolute;left:654px;top:521px;width:2px;height:2px;background:#b8b8b8"></div>
<div style="position:absolute;left:658px;top:521px;width:2px;height:2px;background:#b8b8b8"></div>
</body></html>
